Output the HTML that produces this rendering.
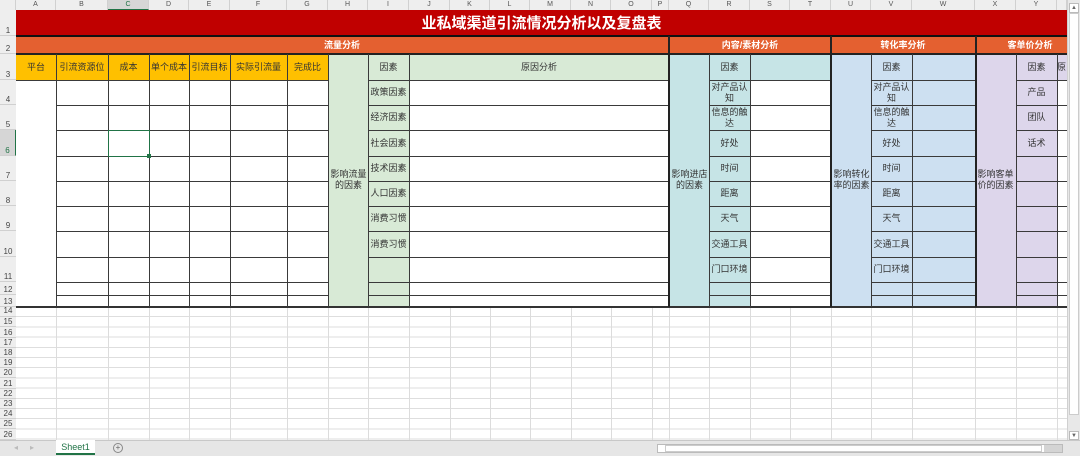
<!DOCTYPE html>
<html><head><meta charset="utf-8">
<style>
*{margin:0;padding:0;box-sizing:border-box}
body{width:1080px;height:456px;overflow:hidden;background:#fff;position:relative;font-family:"Liberation Sans","Noto Sans CJK SC",sans-serif;color:#333}
div{position:absolute}
.h{height:1px;background:#3a3a3a}
.v{width:1px;background:#3a3a3a}
.gh{height:1px;background:#dcdcdc}
.gv{width:1px;background:#dcdcdc}
.t{font-size:9px;text-align:center;line-height:11px;display:flex;align-items:center;justify-content:center}
.ch{top:0;height:10px;font-size:7px;color:#555;text-align:center;line-height:10px;border-right:1px solid #d0d0d0;background:#eeeeee}
.rh{left:0;width:16px;font-size:8px;color:#444;text-align:center;display:flex;align-items:flex-end;justify-content:center;border-bottom:1px solid #d0d0d0;background:#eeeeee}
</style></head><body>
<!-- gridlines area below table -->
<div style="left:16px;top:307px;width:1051px;height:133px;background:repeating-linear-gradient(to bottom,transparent 0,transparent 9.2px,#dedede 9.2px,#dedede 10.2px)"></div>
<div class="gv" style="left:56px;top:307px;height:133px"></div><div class="gv" style="left:108px;top:307px;height:133px"></div><div class="gv" style="left:149px;top:307px;height:133px"></div><div class="gv" style="left:189px;top:307px;height:133px"></div><div class="gv" style="left:230px;top:307px;height:133px"></div><div class="gv" style="left:287px;top:307px;height:133px"></div><div class="gv" style="left:328px;top:307px;height:133px"></div><div class="gv" style="left:368px;top:307px;height:133px"></div><div class="gv" style="left:409px;top:307px;height:133px"></div><div class="gv" style="left:450px;top:307px;height:133px"></div><div class="gv" style="left:490px;top:307px;height:133px"></div><div class="gv" style="left:530px;top:307px;height:133px"></div><div class="gv" style="left:571px;top:307px;height:133px"></div><div class="gv" style="left:611px;top:307px;height:133px"></div><div class="gv" style="left:652px;top:307px;height:133px"></div><div class="gv" style="left:669px;top:307px;height:133px"></div><div class="gv" style="left:709px;top:307px;height:133px"></div><div class="gv" style="left:750px;top:307px;height:133px"></div><div class="gv" style="left:790px;top:307px;height:133px"></div><div class="gv" style="left:831px;top:307px;height:133px"></div><div class="gv" style="left:871px;top:307px;height:133px"></div><div class="gv" style="left:912px;top:307px;height:133px"></div><div class="gv" style="left:975px;top:307px;height:133px"></div><div class="gv" style="left:1016px;top:307px;height:133px"></div><div class="gv" style="left:1057px;top:307px;height:133px"></div>

<!-- column headers -->
<div style="left:0;top:0;width:16px;height:10px;background:#eeeeee;border-right:1px solid #d0d0d0"></div>
<div class="ch" style="left:16px;width:40px">A</div><div class="ch" style="left:56px;width:52px">B</div><div class="ch" style="left:108px;width:41px;background:#d6d6d6;color:#217346;border-bottom:1px solid #217346">C</div><div class="ch" style="left:149px;width:40px">D</div><div class="ch" style="left:189px;width:41px">E</div><div class="ch" style="left:230px;width:57px">F</div><div class="ch" style="left:287px;width:41px">G</div><div class="ch" style="left:328px;width:40px">H</div><div class="ch" style="left:368px;width:41px">I</div><div class="ch" style="left:409px;width:41px">J</div><div class="ch" style="left:450px;width:40px">K</div><div class="ch" style="left:490px;width:40px">L</div><div class="ch" style="left:530px;width:41px">M</div><div class="ch" style="left:571px;width:40px">N</div><div class="ch" style="left:611px;width:41px">O</div><div class="ch" style="left:652px;width:17px">P</div><div class="ch" style="left:669px;width:40px">Q</div><div class="ch" style="left:709px;width:41px">R</div><div class="ch" style="left:750px;width:40px">S</div><div class="ch" style="left:790px;width:41px">T</div><div class="ch" style="left:831px;width:40px">U</div><div class="ch" style="left:871px;width:41px">V</div><div class="ch" style="left:912px;width:63px">W</div><div class="ch" style="left:975px;width:41px">X</div><div class="ch" style="left:1016px;width:41px">Y</div><div class="ch" style="left:1057px;width:10px"></div>

<!-- row headers -->
<div class="rh" style="top:10px;height:26px">1</div><div class="rh" style="top:36px;height:18px">2</div><div class="rh" style="top:54px;height:26px">3</div><div class="rh" style="top:80px;height:25px">4</div><div class="rh" style="top:105px;height:25px">5</div><div class="rh" style="top:130px;height:26px;background:#d6d6d6;color:#217346;border-right:1px solid #217346">6</div><div class="rh" style="top:156px;height:25px">7</div><div class="rh" style="top:181px;height:25px">8</div><div class="rh" style="top:206px;height:25px">9</div><div class="rh" style="top:231px;height:26px">10</div><div class="rh" style="top:257px;height:25px">11</div><div class="rh" style="top:282px;height:13px">12</div><div class="rh" style="top:295px;height:12px">13</div>
<div class="rh" style="top:307px;height:10.2px;line-height:10px">14</div><div class="rh" style="top:317.2px;height:10.2px">15</div><div class="rh" style="top:327.4px;height:10.2px">16</div><div class="rh" style="top:337.6px;height:10.2px">17</div><div class="rh" style="top:347.8px;height:10.2px">18</div><div class="rh" style="top:358px;height:10.2px">19</div><div class="rh" style="top:368.2px;height:10.2px">20</div><div class="rh" style="top:378.4px;height:10.2px">21</div><div class="rh" style="top:388.6px;height:10.2px">22</div><div class="rh" style="top:398.8px;height:10.2px">23</div><div class="rh" style="top:409px;height:10.2px">24</div><div class="rh" style="top:419.2px;height:10.2px">25</div><div class="rh" style="top:429.4px;height:10.6px">26</div>

<!-- fills -->
<div style="left:16px;top:10px;width:1051px;height:26px;background:#c00000"></div>
<div class="t" style="left:16px;top:10px;width:1051px;height:26px;font-size:15px;font-weight:bold;color:#fff;justify-content:center">业私域渠道引流情况分析以及复盘表</div>
<div style="left:16px;top:36px;width:1051px;height:18px;background:#e46030"></div>
<div style="left:16px;top:54px;width:312px;height:26px;background:#ffc000"></div>
<div style="left:328px;top:54px;width:341px;height:253px;background:#d8ead6"></div>
<div style="left:409px;top:80px;width:260px;height:227px;background:#fff"></div>
<div style="left:669px;top:54px;width:162px;height:253px;background:#c6e4e6"></div>
<div style="left:750px;top:80px;width:81px;height:227px;background:#fff"></div>
<div style="left:831px;top:54px;width:144px;height:253px;background:#cde0f1"></div>
<div style="left:975px;top:54px;width:92px;height:253px;background:#ddd6eb"></div>
<div style="left:1057px;top:80px;width:10px;height:227px;background:#fff"></div>

<!-- horizontal lines -->
<div class="h" style="left:16px;top:35px;width:1051px;height:2px;background:#111"></div>
<div class="h" style="left:16px;top:53px;width:1051px;height:2px;background:#222"></div>
<div class="h" style="left:16px;top:306px;width:1051px;height:2px;background:#333"></div>
<div class="h" style="left:16px;top:80px;width:312px"></div>
<div class="h" style="left:368px;top:80px;width:301px"></div><div class="h" style="left:709px;top:80px;width:122px"></div><div class="h" style="left:871px;top:80px;width:104px"></div><div class="h" style="left:1016px;top:80px;width:51px"></div>
<div class="h" style="left:56px;top:105px;width:272px"></div><div class="h" style="left:368px;top:105px;width:301px"></div><div class="h" style="left:709px;top:105px;width:122px"></div><div class="h" style="left:871px;top:105px;width:104px"></div><div class="h" style="left:1016px;top:105px;width:51px"></div>
<div class="h" style="left:56px;top:130px;width:272px"></div><div class="h" style="left:368px;top:130px;width:301px"></div><div class="h" style="left:709px;top:130px;width:122px"></div><div class="h" style="left:871px;top:130px;width:104px"></div><div class="h" style="left:1016px;top:130px;width:51px"></div>
<div class="h" style="left:56px;top:156px;width:272px"></div><div class="h" style="left:368px;top:156px;width:301px"></div><div class="h" style="left:709px;top:156px;width:122px"></div><div class="h" style="left:871px;top:156px;width:104px"></div><div class="h" style="left:1016px;top:156px;width:51px"></div>
<div class="h" style="left:56px;top:181px;width:272px"></div><div class="h" style="left:368px;top:181px;width:301px"></div><div class="h" style="left:709px;top:181px;width:122px"></div><div class="h" style="left:871px;top:181px;width:104px"></div><div class="h" style="left:1016px;top:181px;width:51px"></div>
<div class="h" style="left:56px;top:206px;width:272px"></div><div class="h" style="left:368px;top:206px;width:301px"></div><div class="h" style="left:709px;top:206px;width:122px"></div><div class="h" style="left:871px;top:206px;width:104px"></div><div class="h" style="left:1016px;top:206px;width:51px"></div>
<div class="h" style="left:56px;top:231px;width:272px"></div><div class="h" style="left:368px;top:231px;width:301px"></div><div class="h" style="left:709px;top:231px;width:122px"></div><div class="h" style="left:871px;top:231px;width:104px"></div><div class="h" style="left:1016px;top:231px;width:51px"></div>
<div class="h" style="left:56px;top:257px;width:272px"></div><div class="h" style="left:368px;top:257px;width:301px"></div><div class="h" style="left:709px;top:257px;width:122px"></div><div class="h" style="left:871px;top:257px;width:104px"></div><div class="h" style="left:1016px;top:257px;width:51px"></div>
<div class="h" style="left:56px;top:282px;width:272px"></div><div class="h" style="left:368px;top:282px;width:301px"></div><div class="h" style="left:709px;top:282px;width:122px"></div><div class="h" style="left:871px;top:282px;width:104px"></div><div class="h" style="left:1016px;top:282px;width:51px"></div>
<div class="h" style="left:56px;top:295px;width:272px"></div><div class="h" style="left:368px;top:295px;width:301px"></div><div class="h" style="left:709px;top:295px;width:122px"></div><div class="h" style="left:871px;top:295px;width:104px"></div><div class="h" style="left:1016px;top:295px;width:51px"></div>

<!-- vertical lines -->
<div class="v" style="left:56px;top:54px;height:253px"></div><div class="v" style="left:108px;top:54px;height:253px"></div><div class="v" style="left:149px;top:54px;height:253px"></div><div class="v" style="left:189px;top:54px;height:253px"></div><div class="v" style="left:230px;top:54px;height:253px"></div><div class="v" style="left:287px;top:54px;height:253px"></div><div class="v" style="left:328px;top:54px;height:253px"></div><div class="v" style="left:368px;top:54px;height:253px"></div><div class="v" style="left:409px;top:54px;height:253px"></div>
<div class="v" style="left:668px;top:36px;height:271px;width:2px;background:#222"></div>
<div class="v" style="left:709px;top:54px;height:253px"></div><div class="v" style="left:750px;top:54px;height:253px"></div>
<div class="v" style="left:830px;top:36px;height:271px;width:2px;background:#222"></div>
<div class="v" style="left:871px;top:54px;height:253px"></div><div class="v" style="left:912px;top:54px;height:253px"></div>
<div class="v" style="left:975px;top:36px;height:271px;width:2px;background:#222"></div>
<div class="v" style="left:1016px;top:54px;height:253px"></div><div class="v" style="left:1057px;top:54px;height:253px"></div>

<!-- selected cell -->
<div style="left:108px;top:130px;width:42px;height:27px;border:1.5px solid #217346"></div>
<div style="left:147px;top:154px;width:4px;height:4px;background:#217346"></div>

<!-- section titles -->
<div class="t" style="left:16px;top:36px;width:652px;height:18px;color:#fff;font-weight:bold">流量分析</div>
<div class="t" style="left:669px;top:36px;width:162px;height:18px;color:#fff;font-weight:bold">内容/素材分析</div>
<div class="t" style="left:831px;top:36px;width:144px;height:18px;color:#fff;font-weight:bold">转化率分析</div>
<div class="t" style="left:990px;top:36px;width:80px;height:18px;color:#fff;font-weight:bold">客单价分析</div>

<!-- row 3 -->
<div class="t" style="left:16px;top:54px;width:40px;height:26px">平台</div><div class="t" style="left:56px;top:54px;width:52px;height:26px">引流资源位</div><div class="t" style="left:108px;top:54px;width:41px;height:26px">成本</div><div class="t" style="left:149px;top:54px;width:40px;height:26px">单个成本</div><div class="t" style="left:189px;top:54px;width:41px;height:26px">引流目标</div><div class="t" style="left:230px;top:54px;width:57px;height:26px">实际引流量</div><div class="t" style="left:287px;top:54px;width:41px;height:26px">完成比</div>
<div class="t" style="left:368px;top:54px;width:41px;height:26px">因素</div><div class="t" style="left:409px;top:54px;width:260px;height:26px">原因分析</div>
<div class="t" style="left:709px;top:54px;width:41px;height:26px">因素</div><div class="t" style="left:871px;top:54px;width:41px;height:26px">因素</div><div class="t" style="left:1016px;top:54px;width:41px;height:26px">因素</div><div class="t" style="left:1057px;top:54px;width:12px;height:26px;justify-content:flex-start">原</div>

<!-- merged labels -->
<div class="t" style="left:328px;top:80px;width:41px;height:200px">影响流量的因素</div>
<div class="t" style="left:669px;top:80px;width:41px;height:200px">影响进店的因素</div>
<div class="t" style="left:831px;top:80px;width:41px;height:200px">影响转化率的因素</div>
<div class="t" style="left:975px;top:80px;width:41px;height:200px">影响客单价的因素</div>

<!-- I column -->
<div class="t" style="left:368px;top:80px;width:41px;height:25px">政策因素</div><div class="t" style="left:368px;top:105px;width:41px;height:25px">经济因素</div><div class="t" style="left:368px;top:130px;width:41px;height:26px">社会因素</div><div class="t" style="left:368px;top:156px;width:41px;height:25px">技术因素</div><div class="t" style="left:368px;top:181px;width:41px;height:25px">人口因素</div><div class="t" style="left:368px;top:206px;width:41px;height:25px">消费习惯</div><div class="t" style="left:368px;top:231px;width:41px;height:26px">消费习惯</div>
<!-- R column -->
<div class="t" style="left:709px;top:80px;width:41px;height:25px">对产品认知</div><div class="t" style="left:709px;top:105px;width:41px;height:25px">信息的触达</div><div class="t" style="left:709px;top:130px;width:41px;height:26px">好处</div><div class="t" style="left:709px;top:156px;width:41px;height:25px">时间</div><div class="t" style="left:709px;top:181px;width:41px;height:25px">距离</div><div class="t" style="left:709px;top:206px;width:41px;height:25px">天气</div><div class="t" style="left:709px;top:231px;width:41px;height:26px">交通工具</div><div class="t" style="left:709px;top:257px;width:41px;height:25px">门口环境</div>
<!-- V column -->
<div class="t" style="left:871px;top:80px;width:41px;height:25px">对产品认知</div><div class="t" style="left:871px;top:105px;width:41px;height:25px">信息的触达</div><div class="t" style="left:871px;top:130px;width:41px;height:26px">好处</div><div class="t" style="left:871px;top:156px;width:41px;height:25px">时间</div><div class="t" style="left:871px;top:181px;width:41px;height:25px">距离</div><div class="t" style="left:871px;top:206px;width:41px;height:25px">天气</div><div class="t" style="left:871px;top:231px;width:41px;height:26px">交通工具</div><div class="t" style="left:871px;top:257px;width:41px;height:25px">门口环境</div>
<!-- Y column -->
<div class="t" style="left:1016px;top:80px;width:41px;height:25px">产品</div><div class="t" style="left:1016px;top:105px;width:41px;height:25px">团队</div><div class="t" style="left:1016px;top:130px;width:41px;height:26px">话术</div>

<!-- vertical scrollbar -->
<div style="left:1067px;top:0;width:13px;height:440px;background:#e8e8e8;border-left:1px solid #d0d0d0"></div>
<div style="left:1069px;top:3px;width:10px;height:10px;background:#fff;border:1px solid #bbb;font-size:6px;text-align:center;line-height:8px;color:#666">▲</div>
<div style="left:1069px;top:13px;width:10px;height:402px;background:#fff;border:1px solid #ccc"></div>
<div style="left:1069px;top:431px;width:10px;height:9px;background:#fff;border:1px solid #bbb;font-size:6px;text-align:center;line-height:8px;color:#666">▼</div>

<!-- bottom bar -->
<div style="left:0;top:440px;width:1080px;height:16px;background:#e6e6e6;border-top:1px solid #c8c8c8"></div>
<div style="left:14px;top:443px;font-size:8px;color:#bbb">◂</div><div style="left:30px;top:443px;font-size:8px;color:#bbb">▸</div>
<div style="left:56px;top:440px;width:39px;height:15px;background:#fff;border-bottom:2px solid #217346;font-size:9px;color:#217346;text-align:center;line-height:14px">Sheet1</div>
<div style="left:113px;top:443px;width:10px;height:10px;border:1px solid #888;border-radius:50%;font-size:8px;line-height:8px;text-align:center;color:#666">+</div>
<div style="left:657px;top:444px;width:406px;height:9px;background:#fff;border:1px solid #bbb"></div>
<div style="left:665px;top:445px;width:377px;height:7px;background:#fff;border:1px solid #ccc"></div>
<div style="left:1044px;top:445px;width:18px;height:7px;background:#d4d4d4"></div>
</body></html>
